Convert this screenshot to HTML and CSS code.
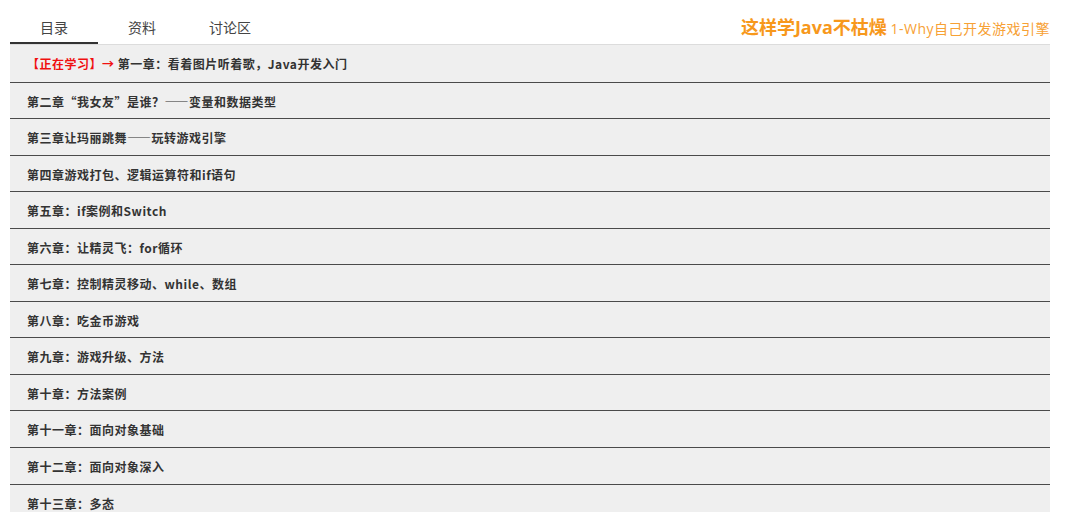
FILE: index.html
```html
<!DOCTYPE html>
<html lang="zh">
<head>
<meta charset="utf-8">
<link rel="stylesheet" href="styles.css">
</head>
<body>
<div class="page">
  <div class="header">
    <div class="tabs">
      <div class="tab active">目录</div>
      <div class="tab">资料</div>
      <div class="tab">讨论区</div>
    </div>
    <div class="title"><span class="main">这样学Java不枯燥</span> <span class="sub">1-Why自己开发游戏引擎</span></div>
  </div>
  <ul class="list">
    <li class="row"><span class="now">【正在学习】→</span> 第一章：看着图片听着歌，Java开发入门</li>
    <li class="row">第二章“我女友”是谁？——变量和数据类型</li>
    <li class="row">第三章让玛丽跳舞——玩转游戏引擎</li>
    <li class="row">第四章游戏打包、逻辑运算符和if语句</li>
    <li class="row">第五章：if案例和Switch</li>
    <li class="row">第六章：让精灵飞：for循环</li>
    <li class="row">第七章：控制精灵移动、while、数组</li>
    <li class="row">第八章：吃金币游戏</li>
    <li class="row">第九章：游戏升级、方法</li>
    <li class="row">第十章：方法案例</li>
    <li class="row">第十一章：面向对象基础</li>
    <li class="row">第十二章：面向对象深入</li>
    <li class="row">第十三章：多态</li>
  </ul>
</div>
</body>
</html>
```

FILE: styles.css
```css
html, body {
  margin: 0;
  padding: 0;
  background: #fff;
  overflow: hidden;
}
body {
  font-family: "Noto Sans CJK SC", "Open Sans", sans-serif;
  color: #333;
}
.page {
  width: 1040px;
  margin-left: 10px;
}
.header {
  display: flex;
  justify-content: space-between;
  align-items: flex-end;
  height: 44px;
}
.tabs {
  display: flex;
  height: 44px;
}
.tab {
  width: 88px;
  text-align: center;
  font-size: 14px;
  line-height: 16px;
  padding-top: 19px;
  color: #444;
  box-sizing: border-box;
  height: 44px;
}
.tab.active {
  border-bottom: 2px solid #333;
}
.title {
  align-self: flex-start;
  padding-top: 13px;
  white-space: nowrap;
}
.title .main {
  font-family: "Open Sans", "Noto Sans CJK SC", sans-serif;
  font-weight: 700;
  font-size: 18px;
  color: #f7981c;
}
.title .sub {
  font-family: "Open Sans", "Noto Sans CJK SC", sans-serif;
  font-size: 14px;
  letter-spacing: 0.5px;
  color: #f7a135;
}
.list {
  list-style: none;
  margin: 0;
  padding: 0;
  background: #efefef;
  border-top: 1px solid #dcdcdc;
}
.row {
  height: 35.55px;
  line-height: 37px;
  padding-left: 17px;
  font-size: 12px;
  letter-spacing: 0.5px;
  font-weight: 700;
  color: #333;
  border-bottom: 1px solid #4a4a4a;
  white-space: nowrap;
}
.row:first-child {
  height: 36.55px;
}
.now {
  color: #f01010;
}
```
